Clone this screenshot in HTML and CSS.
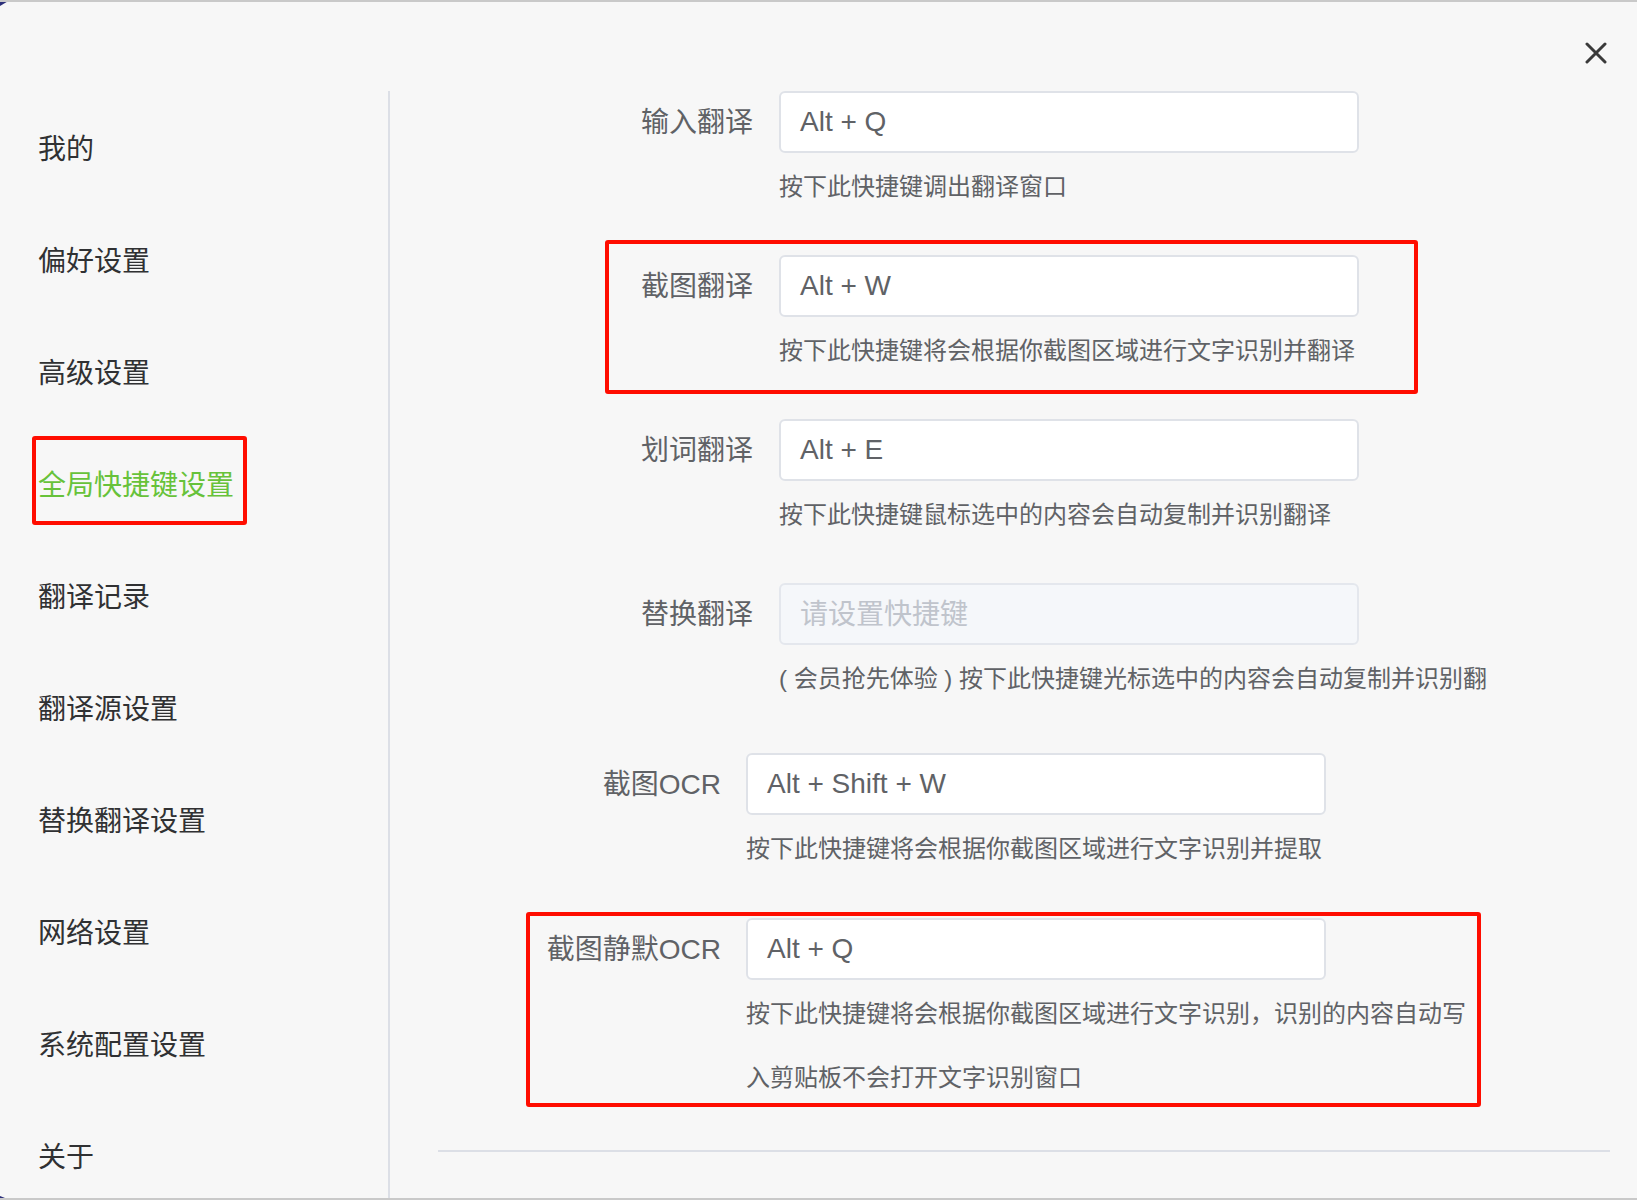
FILE: index.html
```html
<!DOCTYPE html>
<html lang="zh-CN">
<head>
<meta charset="utf-8">
<title>全局快捷键设置</title>
<link rel="stylesheet" href="styles.css">
</head>
<body>
<div class="window">
  <span class="corner corner-tl"></span>
  <span class="corner corner-bl"></span>
  <header class="topbar">
    <button class="close" aria-label="关闭">
      <svg width="22" height="22" viewBox="0 0 22 22"><path d="M2 2 L20 20 M20 2 L2 20" stroke="#3a3a3a" stroke-width="3" stroke-linecap="round" fill="none"/></svg>
    </button>
  </header>
  <div class="main">
    <nav class="sidebar">
      <div class="nav-item">我的</div>
      <div class="nav-item">偏好设置</div>
      <div class="nav-item">高级设置</div>
      <div class="nav-item active">全局快捷键设置<span class="mark mark-nav"></span></div>
      <div class="nav-item">翻译记录</div>
      <div class="nav-item">翻译源设置</div>
      <div class="nav-item">替换翻译设置</div>
      <div class="nav-item">网络设置</div>
      <div class="nav-item">系统配置设置</div>
      <div class="nav-item">关于</div>
    </nav>
    <section class="content">
      <div class="form form-a">
        <div class="row">
          <label class="label">输入翻译</label>
          <div class="input">Alt + Q</div>
          <div class="help">按下此快捷键调出翻译窗口</div>
        </div>
        <div class="row">
          <label class="label">截图翻译</label>
          <div class="input">Alt + W</div>
          <div class="help">按下此快捷键将会根据你截图区域进行文字识别并翻译</div>
          <span class="mark mark-row2"></span>
        </div>
        <div class="row">
          <label class="label">划词翻译</label>
          <div class="input">Alt + E</div>
          <div class="help">按下此快捷键鼠标选中的内容会自动复制并识别翻译</div>
        </div>
        <div class="row">
          <label class="label">替换翻译</label>
          <div class="input input-disabled">请设置快捷键</div>
          <div class="help help-nowrap">( 会员抢先体验 ) 按下此快捷键光标选中的内容会自动复制并识别翻</div>
        </div>
      </div>
      <div class="form form-b">
        <div class="row">
          <label class="label">截图OCR</label>
          <div class="input">Alt + Shift + W</div>
          <div class="help">按下此快捷键将会根据你截图区域进行文字识别并提取</div>
        </div>
        <div class="row">
          <label class="label">截图静默OCR</label>
          <div class="input">Alt + Q</div>
          <div class="help help-wide">按下此快捷键将会根据你截图区域进行文字识别，识别的内容自动写入剪贴板不会打开文字识别窗口</div>
          <span class="mark mark-row6"></span>
        </div>
      </div>
      <div class="divider"></div>
    </section>
  </div>
</div>
</body>
</html>
```

FILE: styles.css
```css
* { box-sizing: border-box; }

html, body {
  margin: 0;
  padding: 0;
  background: #f7f7f7;
}

body {
  font-family: "Liberation Sans", "Noto Sans CJK SC", sans-serif;
  color: #303133;
}

.window {
  position: relative;
  width: 1637px;
  height: 1200px;
  background: #f7f7f7;
  border-top: 2px solid #c9c9c9;
  border-bottom: 2px solid #c9c9c9;
  overflow: hidden;
}

.corner {
  position: absolute;
  left: 0;
  width: 10px;
  height: 6px;
  background: #2b2f7a;
}
.corner-tl {
  top: -2px;
  clip-path: polygon(0 0, 100% 0, 0 100%);
}
.corner-bl {
  bottom: -2px;
  height: 4px;
  clip-path: polygon(0 0, 100% 100%, 0 100%);
}

.topbar {
  height: 89px;
  display: flex;
  justify-content: flex-end;
  align-items: flex-start;
  padding: 40px 30px 0 0;
}

.close {
  border: 0;
  background: transparent;
  padding: 0;
  width: 22px;
  height: 22px;
  display: block;
}
.close svg { display: block; }

.main {
  display: flex;
  height: 1107px;
}

.sidebar {
  width: 390px;
  flex: none;
  border-right: 2px solid #dcdfe6;
}

.nav-item {
  position: relative;
  height: 112px;
  line-height: 112px;
  padding-top: 3px;
  padding-left: 38px;
  font-size: 28px;
  color: #303133;
  white-space: nowrap;
}

.nav-item.active {
  color: #67c23a;
}

.mark {
  position: absolute;
  border: 4px solid #ff0d00;
  border-radius: 3px;
  pointer-events: none;
}

.mark-nav {
  left: 32px;
  top: 9px;
  width: 215px;
  height: 89px;
}

.content {
  flex: 1;
  min-width: 0;
}

.form {
  display: flex;
  flex-direction: column;
}

.form-a { gap: 38px; }
.form-b { gap: 39px; margin-top: 44px; }

.row {
  position: relative;
  display: grid;
  grid-template-rows: 62px auto;
}

.form-a .row { grid-template-columns: 389px 580px; }
.form-a .label { padding-right: 26px; }
.form-b .row { grid-template-columns: 356px 580px; }
.form-b .label { padding-right: 25px; }

.label {
  grid-column: 1;
  grid-row: 1;
  height: 62px;
  text-align: right;
  font-size: 28px;
  line-height: 60px;
  padding-top: 2px;
  color: #606266;
  white-space: nowrap;
}

.input {
  grid-column: 2;
  grid-row: 1;
  height: 62px;
  line-height: 58px;
  padding: 0 19px;
  background: #ffffff;
  border: 2px solid #dfe2e8;
  border-radius: 6px;
  font-size: 28px;
  color: #606266;
  white-space: nowrap;
}

.input-disabled {
  background: #f5f7fa;
  border-color: #e4e7ed;
  color: #c0c4cc;
  padding-top: 1px;
}

.help {
  grid-column: 2;
  grid-row: 2;
  font-size: 24px;
  line-height: 64px;
  padding-top: 2px;
  margin-bottom: -2px;
  color: #606266;
  white-space: nowrap;
}

.help-nowrap { white-space: nowrap; }

.help-wide {
  width: 730px;
  white-space: normal;
}

.mark-row2 {
  left: 215px;
  top: -15px;
  width: 813px;
  height: 154px;
}

.mark-row6 {
  left: 136px;
  top: -6px;
  width: 955px;
  height: 195px;
}

.divider {
  height: 2px;
  background: #dcdfe6;
  margin: 42px 27px 0 48px;
}
```
